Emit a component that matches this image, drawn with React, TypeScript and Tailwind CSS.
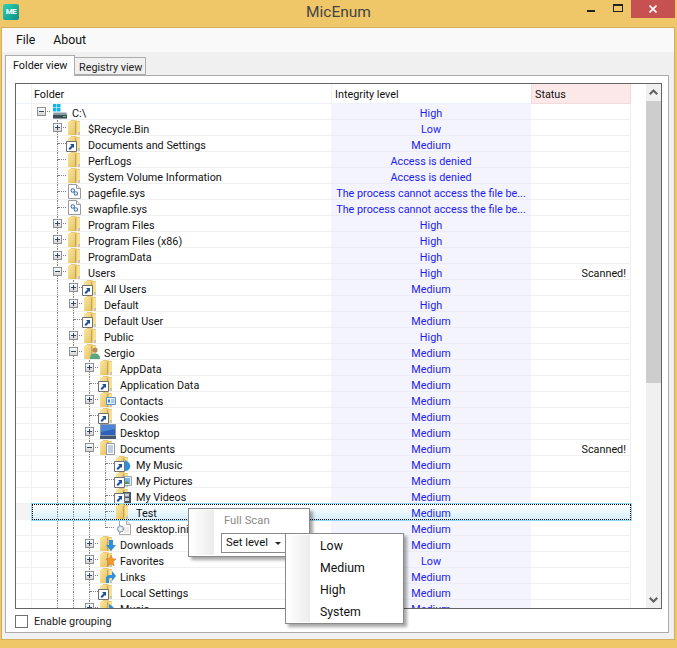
import type { ReactNode } from "react";

type IconKind = "folder" | "drive" | "sys" | "ini" | "desktop";
type Extra = "user" | "contacts" | "music" | "pictures" | "videos" | "downloads" | "favorites" | "links" | "documents";

type Row = {
  depth: number;
  name: string;
  level: string;
  icon?: IconKind;
  exp?: "plus" | "minus";
  link?: boolean;
  extra?: Extra;
  status?: string;
};

const denied = "Access is denied";
const busy = "The process cannot access the file be...";

const rows: Row[] = [
  { depth: 0, name: "C:\\", level: "High", icon: "drive", exp: "minus" },
  { depth: 1, name: "$Recycle.Bin", level: "Low", exp: "plus" },
  { depth: 1, name: "Documents and Settings", level: "Medium", link: true },
  { depth: 1, name: "PerfLogs", level: denied },
  { depth: 1, name: "System Volume Information", level: denied },
  { depth: 1, name: "pagefile.sys", level: busy, icon: "sys" },
  { depth: 1, name: "swapfile.sys", level: busy, icon: "sys" },
  { depth: 1, name: "Program Files", level: "High", exp: "plus" },
  { depth: 1, name: "Program Files (x86)", level: "High", exp: "plus" },
  { depth: 1, name: "ProgramData", level: "High", exp: "plus" },
  { depth: 1, name: "Users", level: "High", exp: "minus", status: "Scanned!" },
  { depth: 2, name: "All Users", level: "Medium", exp: "plus", link: true },
  { depth: 2, name: "Default", level: "High", exp: "plus" },
  { depth: 2, name: "Default User", level: "Medium", link: true },
  { depth: 2, name: "Public", level: "High", exp: "plus" },
  { depth: 2, name: "Sergio", level: "Medium", exp: "minus", extra: "user" },
  { depth: 3, name: "AppData", level: "Medium", exp: "plus" },
  { depth: 3, name: "Application Data", level: "Medium", link: true },
  { depth: 3, name: "Contacts", level: "Medium", exp: "plus", extra: "contacts" },
  { depth: 3, name: "Cookies", level: "Medium", link: true },
  { depth: 3, name: "Desktop", level: "Medium", exp: "plus", icon: "desktop" },
  { depth: 3, name: "Documents", level: "Medium", exp: "minus", extra: "documents", status: "Scanned!" },
  { depth: 4, name: "My Music", level: "Medium", link: true, extra: "music" },
  { depth: 4, name: "My Pictures", level: "Medium", link: true, extra: "pictures" },
  { depth: 4, name: "My Videos", level: "Medium", link: true, extra: "videos" },
  { depth: 4, name: "Test", level: "Medium" },
  { depth: 4, name: "desktop.ini", level: "Medium", icon: "ini" },
  { depth: 3, name: "Downloads", level: "Medium", exp: "plus", extra: "downloads" },
  { depth: 3, name: "Favorites", level: "Low", exp: "plus", extra: "favorites" },
  { depth: 3, name: "Links", level: "Medium", exp: "plus", extra: "links" },
  { depth: 3, name: "Local Settings", level: "Medium", link: true },
  { depth: 3, name: "Music", level: "Medium", exp: "plus", extra: "music" },
];

// does the dotted line of this level carry on below the row
const hasNext = (i: number, level: number) => {
  for (let j = i + 1; j < rows.length; j++) {
    if (rows[j].depth <= level) return rows[j].depth === level;
  }
  return level <= 3;
};

const Folder = () => (
  <svg width="13" height="15" viewBox="0 0 13 15" className="block">
    <defs>
      <linearGradient id="folderFront" x1="0" y1="0" x2="1" y2="1">
        <stop offset="0" stopColor="#fae79f" />
        <stop offset="1" stopColor="#e4bf60" />
      </linearGradient>
    </defs>
    <path d="M3 0h5l1 1h3v14H3z" fill="#e9c873" />
    <path d="M9 2h3v13H9z" fill="#f6e094" />
    <path d="M0 2l1-1h5l2 1v13H0z" fill="url(#folderFront)" />
    <path d="M7.500 2v13" stroke="#c9a550" strokeWidth="1" />
    <path d="M10 12h2v3h-2z" fill="#aebcc4" opacity=".7" />
  </svg>
);

const Drive = () => (
  <svg width="16" height="16" viewBox="0 0 16 16" className="block">
    <path d="M1 0h3.500v3.500H1zM5 0h3.500v3.500H5zM1 4h3.500v3.500H1zM5 4h3.500v3.500H5z" fill="#16b4ee" />
    <path d="M1 10l1-2h12l1 2v5H1z" fill="#8d9aa3" />
    <path d="M1 11h14v3H1z" fill="#3f4d58" />
    <path d="M11 12h3v1h-3z" fill="#5fd05a" />
    <path d="M2 8h12v1H2z" fill="#c5cfd6" />
  </svg>
);

const Page = ({ children }: { children: ReactNode }) => (
  <svg width="13" height="15" viewBox="0 0 13 15" className="block">
    <path d="M.5.500h8l4 4v10H.5z" fill="#fff" stroke="#9a9a9a" />
    <path d="M8.500.500v4h4" fill="#ececec" stroke="#9a9a9a" />
    {children}
  </svg>
);

const SysFile = () => (
  <Page>
    <circle cx="4.800" cy="6.500" r="1.700" fill="none" stroke="#4a78b8" strokeWidth="1.100" />
    <circle cx="7.800" cy="9.500" r="1.700" fill="none" stroke="#4a78b8" strokeWidth="1.100" />
  </Page>
);

const IniFile = () => (
  <svg width="15" height="15" viewBox="0 0 15 15" className="block">
    <path d="M3.500.500h7l4 4v10h-11z" fill="#fff" stroke="#a8a8a8" />
    <path d="M10.500.500v4h4" fill="#ececec" stroke="#a8a8a8" />
    <path d="M8 8h5M8 10h5M8 12h5" stroke="#d8d8d8" />
    <circle cx="4.500" cy="9" r="3" fill="#dfe6ee" stroke="#7d8ea3" strokeWidth="1.400" strokeDasharray="1.400 .7" />
    <circle cx="4.500" cy="9" r="1" fill="#fff" />
  </svg>
);

const Monitor = () => (
  <svg width="16" height="15" viewBox="0 0 16 15" className="block">
    <path d="M0 0h16v12H0z" fill="#8b99ad" />
    <path d="M1 1h14v10H1z" fill="#2f62b8" />
    <path d="M1 1h14v4L1 8z" fill="#4d84d6" />
    <path d="M0 12h16v3H0z" fill="#46586e" />
  </svg>
);

const ShortcutBadge = () => (
  <svg width="11" height="11" viewBox="0 0 11 11" className="absolute -left-[2px] bottom-[-1px] block">
    <path d="M.5.500h10v10H.5z" fill="#fff" stroke="#6f7378" />
    <path d="M4 3h4v4L7 6 4 9 2.500 7.500l3-3z" fill="#1d4fa0" />
  </svg>
);

const extraIcons: Record<Extra, ReactNode> = {
  user: (
    <>
      <circle cx="5" cy="3" r="2.600" fill="#b98a5e" />
      <path d="M0 12c0-4 2-5.500 5-5.500s5 1.500 5 5.500z" fill="#5ba583" />
    </>
  ),
  contacts: (
    <>
      <path d="M.5 2.500h9v7h-9z" fill="#e8f2fb" stroke="#5a93cc" />
      <path d="M2 4.500h2v3H2z" fill="#3f7fc0" />
      <path d="M5 5h3.500M5 7h3.500" stroke="#6c9ccb" />
    </>
  ),
  music: <path d="M3 1l3 2c3 2 3 6 0 8l-3 1z" fill="#2e8fdc" />,
  pictures: (
    <>
      <path d="M.5 1.500h9v9h-9z" fill="#e9eef3" stroke="#9aa6b2" />
      <path d="M2 3h6v6H2z" fill="#77b6e4" />
      <path d="M2 9l3-3 3 3z" fill="#5c8c5a" />
    </>
  ),
  videos: (
    <>
      <path d="M1 1h8v11H1z" fill="#4b5560" />
      <path d="M3 2.500h4v3H3zM3 7h4v3H3z" fill="#c5d2de" />
    </>
  ),
  downloads: <path d="M3 1h4v5h3l-5 6-5-6h3z" fill="#2e8fdc" />,
  favorites: <path d="M5 0l1.500 3.700 3.500.3-2.700 2.500L8 11 5 8.700 2 11l.7-4.500L0 4l3.500-.3z" fill="#f29a2e" stroke="#d9691e" strokeWidth=".5" />,
  links: <path d="M0 12V7c0-2 2-3 4-3h2V0l4 5-4 5V7H4c-1 0-1 1-1 2v3z" fill="#2e8fdc" />,
  documents: (
    <>
      <path d="M.5.500h8v11h-8z" fill="#fff" stroke="#8f9aa6" />
      <path d="M2 3h5M2 5h5M2 7h5M2 9h5" stroke="#7f9cc0" />
    </>
  ),
};

const TreeIcon = ({ row }: { row: Row }) => {
  const kind = row.icon ?? "folder";
  return (
    <div className="relative w-4 h-[15px] shrink-0">
      {kind === "folder" && <Folder />}
      {kind === "drive" && <Drive />}
      {kind === "sys" && <SysFile />}
      {kind === "ini" && <IniFile />}
      {kind === "desktop" && <Monitor />}
      {row.extra && (
        <svg width="10" height="12" viewBox="0 0 10 12" className="absolute left-[6px] top-[3px] block">
          {extraIcons[row.extra]}
        </svg>
      )}
      {row.link && <ShortcutBadge />}
    </div>
  );
};

const Slot = ({ top, bottom, own, exp }: { top: boolean; bottom: boolean; own: boolean; exp?: "plus" | "minus" }) => (
  <div className="relative w-4 h-[15px] shrink-0 grid grid-cols-2 grid-rows-[8px_7px]">
    <div className={top ? "border-r border-dotted border-[#808080]" : ""} />
    <div className={own ? "border-b border-dotted border-[#808080] mt-[-1px]" : ""} />
    <div className={bottom ? "border-r border-dotted border-[#808080]" : ""} />
    <div />
    {exp && (
      <div className="absolute left-[3px] top-[3px] w-[9px] h-[9px] border border-[#8f8f8f] bg-gradient-to-b from-white to-[#d6d6d6] flex items-center justify-center">
        <svg width="7" height="7" viewBox="0 0 7 7" className="block">
          <path d="M1 3.500h5" stroke="#33476b" />
          {exp === "plus" && <path d="M3.500 1v5" stroke="#33476b" />}
        </svg>
      </div>
    )}
  </div>
);

const TreeRow = ({ row, index }: { row: Row; index: number }) => {
  const selected = row.name === "Test";
  const slots = [];
  for (let s = 0; s <= row.depth; s++) {
    const own = s === row.depth;
    const next = s > 0 && hasNext(index, s);
    slots.push(<Slot key={s} top={s > 0 && (own || next)} bottom={next} own={own} exp={own ? row.exp : undefined} />);
  }
  const line = selected ? "" : "border-b border-[#f0f0f0]";
  return (
    <div className="flex h-4 shrink-0">
      <div className={`w-[16px] shrink-0 border-r border-[#edf2f9] ${selected ? "bg-[#f4f4f4]" : "border-b border-b-[#f0f0f0]"}`} />
      <div
        className={`flex w-[599px] shrink-0 ${
          selected
            ? "relative z-10 bg-gradient-to-b from-white to-[#d3eefc] shadow-[0_0_0_1px_#92d8f6] outline-1 outline-dotted outline-black -outline-offset-1"
            : ""
        }`}
      >
        <div className={`w-[299px] shrink-0 flex pl-[2px] ${line}`}>
          {slots}
          <div className="ml-[2px]">
            <TreeIcon row={row} />
          </div>
          <span className="ml-1 leading-[19px] whitespace-nowrap text-[#111]">{row.name}</span>
        </div>
        <div className={`w-[200px] shrink-0 text-center leading-[19px] text-[#1c1cf0] whitespace-nowrap ${selected ? "" : "bg-[#f4f4fe] border-b border-[#ececf4]"}`}>
          {row.level}
        </div>
        <div className={`w-[100px] shrink-0 text-right pr-1 leading-[19px] text-[#111] ${line} ${selected ? "" : "border-r border-r-[#f0f0f0]"}`}>
          {row.status}
        </div>
      </div>
    </div>
  );
};

const Chevron = ({ down }: { down?: boolean }) => (
  <svg width="9" height="7" viewBox="0 0 9 7" className={`block ${down ? "rotate-180" : ""}`}>
    <path d="M4.500 0L9 4.500 7.500 6 4.500 3 1.500 6 0 4.500z" fill="#606060" />
  </svg>
);

const Scrollbar = () => (
  <div className="w-[15px] mr-[1px] shrink-0 flex flex-col bg-[#f0f0f0]">
    <div className="h-[17px] flex items-center justify-center shrink-0">
      <Chevron />
    </div>
    <div className="h-[282px] bg-[#cdcdcd] shrink-0" />
    <div className="flex-1" />
    <div className="h-[17px] flex items-center justify-center shrink-0">
      <Chevron down />
    </div>
  </div>
);

const MenuPanel = ({ className, strip, children }: { className: string; strip: string; children: ReactNode }) => (
  <div className={`absolute z-20 bg-white border border-[#8a8a8a] shadow-[3px_3px_3px_rgba(0,0,0,0.35)] flex ${className}`}>
    <div className={`${strip} my-[1px] ml-[1px] shrink-0 bg-gradient-to-r from-white to-[#ececec]`} />
    <div className="flex-1 relative">{children}</div>
  </div>
);

export default function App() {
  return (
    <div
      className="relative w-[677px] h-[648px] overflow-hidden bg-[#efc768] text-[10.800px] flex flex-col"
      style={{ fontFamily: 'Roboto, "Open Sans", sans-serif' }}
    >
      <div className="h-[27px] shrink-0 grid grid-cols-[1fr_auto_1fr]">
        <div className="pl-[3px] pt-[4px]">
          <div className="w-4 h-4 rounded-[2px] bg-gradient-to-br from-[#2ed3b4] to-[#0c8f8a] text-white text-[8px] font-bold leading-[16px] text-center tracking-[-0.5px]">
            ME
          </div>
        </div>
        <div className="text-[15.500px] leading-[25px] text-[#444]">MicEnum</div>
        <div className="flex justify-end items-start pr-[2px]">
          <div className="w-[8px] h-[2px] bg-[#222] mt-[10px]" />
          <div className="w-[10px] h-[8px] border border-t-2 border-[#222] mt-[4px] ml-[18px]" />
          <div className="w-[44px] h-[18px] ml-[8px] bg-[#c75050] flex items-center justify-center">
            <svg width="8" height="8" viewBox="0 0 8 8" className="block">
              <path d="M.5.500l7 7M7.500.500l-7 7" stroke="#fff" strokeWidth="1.600" />
            </svg>
          </div>
        </div>
      </div>

      <div className="ml-[1px] mr-[2px] h-[613px] shrink-0 bg-[#f0f0f0] border border-[#d4ae5c] flex flex-col">
        <div className="h-[24px] shrink-0 bg-[#f9f9f9] flex items-center gap-[18px] pl-[14px] pt-px text-[12.300px] text-[#111]">
          <span>File</span>
          <span>About</span>
        </div>

        <div className="pl-[3px] pr-[5px] flex-1 flex flex-col">
          <div className="h-[23px] shrink-0 flex items-end">
            <div className="relative z-10 w-[70px] h-[21px] -mb-px bg-white border border-b-0 border-[#acacac] pl-[7px] leading-[19px] text-[#111]">
              Folder view
            </div>
            <div className="w-[71px] h-[18px] border border-l-0 border-[#acacac] bg-[#f0f0f0] pl-[4px] leading-[19px] text-[#222] whitespace-nowrap">
              Registry view
            </div>
          </div>

          <div className="h-[558px] shrink-0 border border-[#acacac] bg-white pl-[9px] pt-[7px]">
            <div className="w-[647px] h-[526px] border border-[#646464] flex overflow-hidden">
              <div className="w-[630px] shrink-0 flex flex-col overflow-hidden">
                <div className="h-5 shrink-0 flex leading-[22px] text-[#111]">
                  <div className="w-[16px] border-r border-b border-[#edf2f9]" />
                  <div className="w-[299px] pl-[2px] border-b border-[#edf2f9]">Folder</div>
                  <div className="w-[200px] pl-[3px] border-l border-b border-[#edf2f9]">Integrity level</div>
                  <div className="w-[100px] pl-[3px] bg-[#fce8e8] border border-t-0 border-[#f0dcdc]">Status</div>
                </div>
                {rows.map((row, i) => (
                  <TreeRow key={i} row={row} index={i} />
                ))}
              </div>
              <div className="flex-1" />
              <Scrollbar />
            </div>
            <div className="flex items-center mt-[6px] leading-[13px]">
              <div className="w-[13px] h-[13px] border border-[#707070] bg-white" />
              <span className="ml-[6px] text-[#222]">Enable grouping</span>
            </div>
          </div>
        </div>
      </div>

      <MenuPanel className="left-[188px] top-[508px] w-[122px] h-[49px]" strip="w-[24px]">
        <div className="pl-[10px] pt-[4px] text-[#8a8a8a] leading-[16px] text-[11.300px]">Full Scan</div>
        <div className="absolute left-[7px] top-[24px] w-[65px] h-[20px] border border-[#8a8a8a] bg-white pl-[4px] leading-[18px] text-[#111] text-[11.300px] flex items-center gap-[7px]">
          Set level
          <svg width="6" height="3" viewBox="0 0 6 3" className="block">
            <path d="M0 0h6L3 3z" fill="#222" />
          </svg>
        </div>
      </MenuPanel>

      <MenuPanel className="left-[285px] top-[533px] w-[119px] h-[91px]" strip="w-[23px]">
        <div className="pl-[10px] pt-[1px] flex flex-col text-[#111] text-[12.300px]">
          <span className="h-[22px] leading-[22px]">Low</span>
          <span className="h-[22px] leading-[22px]">Medium</span>
          <span className="h-[22px] leading-[22px]">High</span>
          <span className="h-[22px] leading-[22px]">System</span>
        </div>
      </MenuPanel>
    </div>
  );
}
